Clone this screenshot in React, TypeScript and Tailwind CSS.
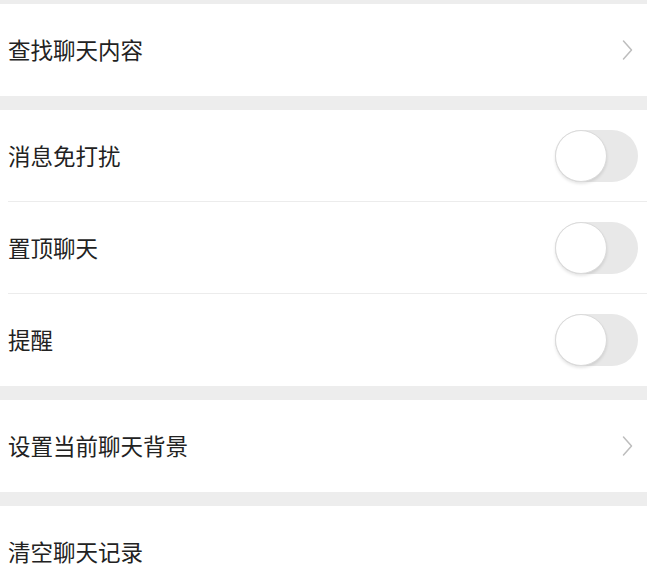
import React from "react";

function Chevron() {
  return (
    <svg width="11" height="22" viewBox="0 0 11 22" fill="none" className="shrink-0">
      <path d="M1.5 2 L9.5 11 L1.5 20" stroke="#bdbdbd" strokeWidth="1.5" strokeLinecap="round" strokeLinejoin="round" />
    </svg>
  );
}

function Toggle() {
  return (
    <div className="relative w-[83px] h-[52px] rounded-full bg-[#e8e8e8] shrink-0">
      <div className="absolute left-0 top-0 w-[52px] h-[52px] rounded-full bg-white border border-[#dadada] shadow-[0_2px_3px_rgba(0,0,0,0.1)]" />
    </div>
  );
}

function Row({ label, right, divider }: { label: string; right?: React.ReactNode; divider?: boolean }) {
  return (
    <div className="pl-[8px] bg-white">
      <div className={"flex items-center justify-between h-[92px] pr-[9px] " + (divider ? "border-b border-[#ececec]" : "")}>
        <span className="text-[22.5px] text-[#222]">{label}</span>
        {right}
      </div>
    </div>
  );
}

export default function App() {
  const font = { fontFamily: '"Noto Sans CJK SC", "Noto Sans", sans-serif' };
  return (
    <div className="w-[647px] h-[570px] overflow-hidden bg-[#ededed]" style={font}>
      <div className="h-[4px]" />
      <Row label="查找聊天内容" right={<div className="pr-[5px]"><Chevron /></div>} />
      <div className="h-[14px]" />
      <Row label="消息免打扰" right={<Toggle />} divider />
      <Row label="置顶聊天" right={<Toggle />} divider />
      <Row label="提醒" right={<Toggle />} />
      <div className="h-[14px]" />
      <Row label="设置当前聊天背景" right={<div className="pr-[5px]"><Chevron /></div>} />
      <div className="h-[14px]" />
      <Row label="清空聊天记录" />
    </div>
  );
}
